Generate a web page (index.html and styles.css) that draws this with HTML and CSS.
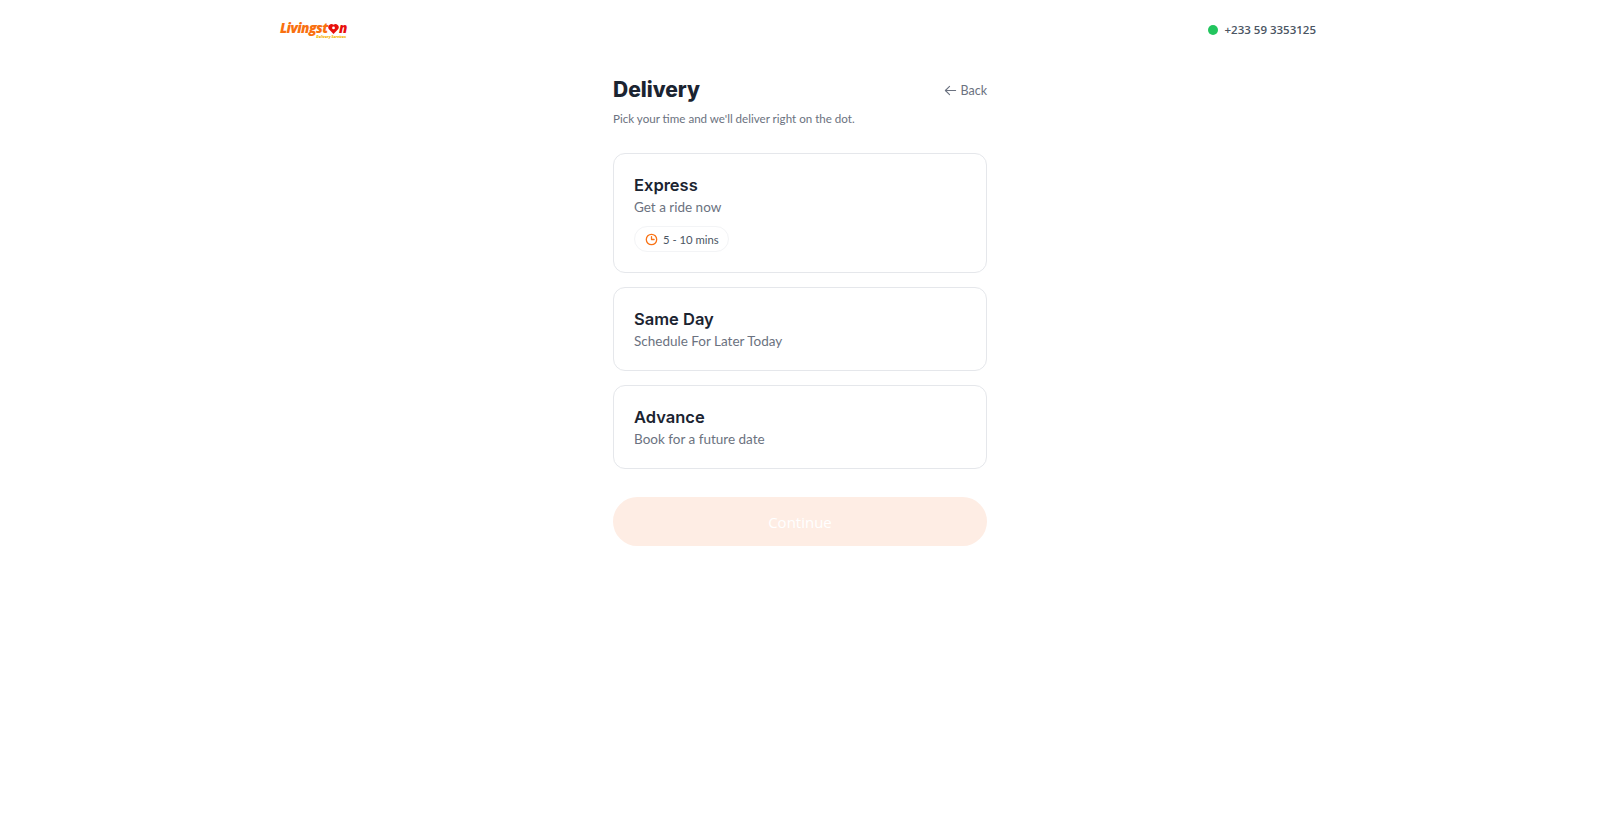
FILE: index.html
```html
<!DOCTYPE html>
<html lang="en">
<head>
    <meta charset="UTF-8">
    <meta name="viewport" content="width=device-width, initial-scale=1.0">
    <title>Delivery</title>
    <link rel="stylesheet" href="styles.css">
</head>
<body>

    <header class="topbar">
        <div class="logo">
            <div class="logo-name">
                <span class="logo-orange">Livingst</span><svg class="logo-pin" viewBox="0 0 12 12" width="11" height="12"><path d="M6 11.5 1 6.2A3.5 3.5 0 0 1 6 1.4a3.5 3.5 0 0 1 5 4.8z" fill="#e8100c"/><circle cx="6" cy="4.8" r="1.5" fill="#fff"/></svg><span class="logo-red">n</span>
            </div>
            <div class="logo-sub">Delivery Services</div>
        </div>
        <div class="phone">
            <span class="phone-dot"></span>
            <span class="phone-number">+233 59 3353125</span>
        </div>
    </header>

    <main class="panel">
        <div class="panel-head">
            <h1>Delivery</h1>
            <a class="back" href="#">
                <svg viewBox="0 0 14 14" width="13" height="13" fill="none" stroke="#6b7280" stroke-width="1.2" stroke-linecap="round" stroke-linejoin="round"><path d="M12.5 7h-11M6 2.5 1.5 7 6 11.5"/></svg>
                Back
            </a>
        </div>
        <p class="panel-sub">Pick your time and we'll deliver right on the dot.</p>

        <div class="options">
            <div class="option">
                <h2>Express</h2>
                <p>Get a ride now</p>
                <span class="eta">
                    <svg viewBox="0 0 14 14" width="13" height="13" fill="none" stroke="#f97316" stroke-width="1.4" stroke-linecap="round" stroke-linejoin="round"><circle cx="7" cy="7" r="5.6"/><path d="M7 3.8V7h2.8"/></svg>
                    5 - 10 mins
                </span>
            </div>
            <div class="option">
                <h2>Same Day</h2>
                <p>Schedule For Later Today</p>
            </div>
            <div class="option">
                <h2>Advance</h2>
                <p>Book for a future date</p>
            </div>
        </div>

        <button class="continue" disabled>Continue</button>
    </main>

</body>
</html>
```

FILE: styles.css
```css
body {
    margin: 0;
    background-color: #fff;
    font-family: Lato, 'Noto Sans', sans-serif;
    color: #1b2431;
}

.topbar {
    width: 1040px;
    height: 59px;
    margin: 0 auto;
    display: flex;
    align-items: center;
    justify-content: space-between;
}

.logo {
    width: 68px;
    font-family: 'Open Sans', sans-serif;
    font-style: italic;
    font-weight: 800;
    margin-top: 2px;
}

.logo-name {
    display: flex;
    align-items: center;
    font-size: 13.5px;
    line-height: 13px;
    letter-spacing: -0.55px;
}

.logo-orange {
    color: #f97010;
}

.logo-red {
    color: #e8100c;
}

.logo-pin {
    flex: none;
}

.logo-sub {
    font-size: 3.6px;
    line-height: 4px;
    color: #f5b400;
    text-align: right;
    padding-right: 2px;
}

.phone {
    display: flex;
    align-items: center;
    gap: 7px;
    padding-right: 4px;
}

.phone-dot {
    width: 10px;
    height: 10px;
    border-radius: 50%;
    background-color: #22c55e;
}

.phone-number {
    font-family: 'Open Sans', sans-serif;
    font-size: 11.5px;
    font-weight: 600;
    color: #4b5563;
}

.panel {
    width: 374px;
    margin: 0 auto;
}

.panel-head {
    display: flex;
    align-items: center;
    justify-content: space-between;
    margin-top: 16px;
}

h1 {
    margin: 0;
    font-family: Inter, sans-serif;
    font-size: 21px;
    line-height: 30px;
    font-weight: 800;
}

.back {
    display: flex;
    align-items: center;
    gap: 3px;
    font-size: 12.5px;
    color: #6b7280;
    text-decoration: none;
}

.panel-sub {
    margin: 5px 0 0;
    font-size: 11.6px;
    line-height: 18px;
    color: #6b7280;
}

.options {
    display: flex;
    flex-direction: column;
    gap: 14px;
    margin-top: 25px;
}

.option {
    padding: 20px 20px 19px;
    border: 1px solid #e5e7eb;
    border-radius: 12px;
}

.option h2 {
    margin: 0;
    font-family: Inter, sans-serif;
    font-size: 16.5px;
    line-height: 22px;
    font-weight: 600;
}

.option p {
    margin: 1px 0 0;
    font-size: 13.5px;
    line-height: 20px;
    color: #6b7280;
}

.eta {
    display: inline-flex;
    align-items: center;
    gap: 5px;
    height: 24px;
    margin-top: 9px;
    margin-bottom: 1px;
    padding: 0 9px 0 10px;
    border: 1px solid #f3f4f6;
    border-radius: 13px;
    font-size: 11.3px;
    color: #4b5563;
}

.continue {
    display: block;
    width: 100%;
    height: 49px;
    margin-top: 28px;
    border: none;
    border-radius: 25px;
    background-color: #feede4;
    color: #fff;
    font-family: 'Open Sans', sans-serif;
    font-size: 15px;
    font-weight: 500;
}
```
